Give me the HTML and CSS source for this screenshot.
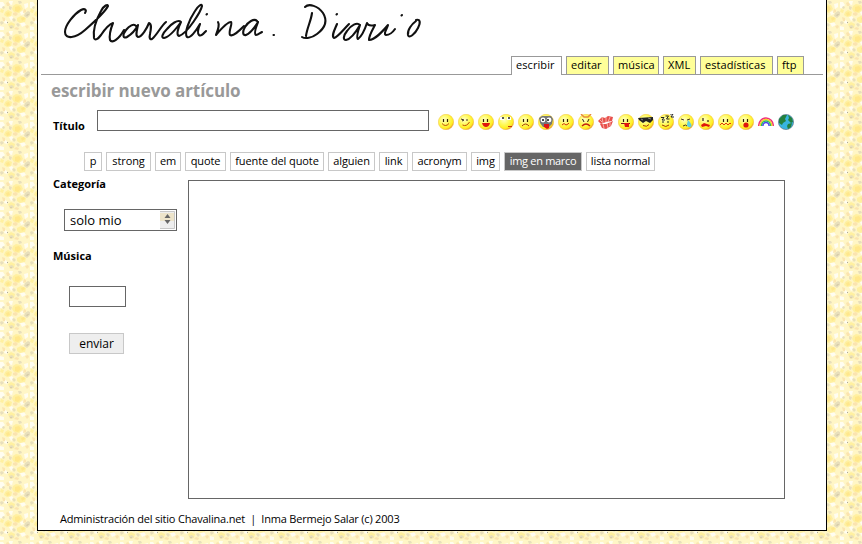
FILE: index.html
```html
<!DOCTYPE html>
<html lang="es">
<head>
<meta charset="utf-8">
<title>Chavalina. Diario</title>
<link rel="stylesheet" href="styles.css">
</head>
<body>
<svg class="backdrop" width="862" height="544" aria-hidden="true">
  <defs>
    <pattern id="petals" width="30" height="30" patternUnits="userSpaceOnUse">
      <rect width="30" height="30" fill="#fff6c6"/>
      <path fill="#fffdf0" d="M0 2h3l2 3-3 3H0zM9 1h4l-1 4-3-1zM24 4l4-1v4l-3 2zM9 17l3-1 2 3-3 2zM20 23l4-1 2 3-4 2zM0 26l4 1v3H0zM20 12l3-1 1 3-3 1zM5 20l2 1v3l-3-1z"/>
      <path fill="#fff0a0" d="M13 6l3-2 5 1 2 4-4 4-5-1-2-3zM5 12l3-2 4 2-1 4-4 1-3-2zM17 18l4-2 5 2-1 4-5 1-3-2zM8 24l3-2 4 2-1 4-4 1zM1 9l3 1-1 3-3-1z"/>
      <path fill="#ffe78c" d="M15 7l4-1 2 3-3 3-3-1zM21 18l3-1 1 2-3 2zM6 13l3-1 1 3-3 1z"/>
      <path fill="#fbe4b0" d="M6 3l2-1 2 2-1 2H7zM13 13l3-1 2 2-2 2-3-1zM24 9l2 1v2l-3 1zM2 17l3 1v3l-2 0zM25 26l3-1 1 2-2 2zM14 29l2-2 3 1-1 2z"/>
      <path fill="#e8dfbc" d="M25 13l3-2 2 1v3l-3 3-3-2zM9 6l3 1-1 3-2-1zM18 1l3 0 1 2-3 1zM0 22l2-1 2 2-3 2zM12 19l2-1 2 2-2 2zM9 26l3-1 2 2-3 2zM3 6l2 1-1 2-2-1zM16 24l2-1 2 2-2 2z"/>
      <path fill="#d9cfac" d="M27 14h2v1h-1v1h-2zM10 27h2v1h-2z"/>
      <path fill="#aaa89a" d="M7 22h1v1H7z"/>
    </pattern>
  </defs>
  <rect width="862" height="544" fill="url(#petals)"/>
</svg>

<svg class="sprites" width="0" height="0" aria-hidden="true">
  <defs>
    <radialGradient id="skin" cx="38%" cy="35%" r="70%">
      <stop offset="0" stop-color="#ffffc8"/><stop offset=".45" stop-color="#fffa5c"/><stop offset=".82" stop-color="#ffec20"/><stop offset="1" stop-color="#e88430"/>
    </radialGradient>
    <g id="face"><circle cx="8" cy="8" r="7.7" fill="url(#skin)" stroke="#f2c040" stroke-width=".5"/></g>
    <g id="eyes"><path d="M5.500 5v3M9.500 5v3" stroke="#332200" stroke-width="1.200"/></g>
  </defs>
</svg>

<div class="page">
  <header class="header">
    <svg class="logo" width="370" height="50" viewBox="60 0 370 50" role="img" aria-label="Chavalina. Diario">
      <g fill="none" stroke="#111" stroke-width="2.100" stroke-linecap="round" stroke-linejoin="round">
        <path d="M85 13c2-3 0-5-4-3-7 4-16 15-16 22 0 8 11 6 20-2 8-7 20-18 23-24 0-2-4-1-7 5-5 9-8 20-7 27 1 3 4 1 7-3 4-6 9-11 12-12-2 5-4 12-3 17 2 4 9-1 14-10"/>
        <path d="M136 26c-2-3-7 0-10 4-4 5-3 9 1 7 5-3 9-8 11-12-1 5-3 11 0 12 4 0 9-9 11-14 3 1 2 6 1 11-1 4 0 6 2 5 5-4 9-13 14-17"/>
        <path d="M181 22c-3-3-10 2-14 7-5 5-6 9-3 9 6-1 12-9 17-16-3 6-5 13-2 14 9-3 22-25 23-30 0-3-4 0-7 5-6 9-11 22-8 26 3 2 9-6 13-13-2 5-3 9-1 11 2 2 5-2 7-4"/>
        <path d="M207 14l-.5.5M218 22c2 3 0 8-2 13 5-6 11-13 15-13 2 1-3 10-1 13 3 2 9-4 14-9"/>
        <path d="M257 21c-3-3-9 1-12 6-3 5-2 9 1 8 5-2 9-8 12-13-2 5-4 12-2 13 2 0 4-2 6-3M273.500 35h.5"/>
        <path d="M312 13c-1 8-5 15-6 23M305 7c4-4 13-1 18 6 5 8 2 15-6 21-5 4-12 5-15 3"/>
        <path d="M337 14l-.5.500M337 24c-2 5-6 12-3 14 4-1 9-8 15-14"/>
        <path d="M360 25c-3-3-9 0-13 6-4 5-4 9-1 9 5-1 10-8 14-15-2 6-4 13-2 14 4-3 7-10 9-16 1 3 4 3 8 2-2 4-6 10-6 15 6 0 13-8 19-15-1 4-5 9-2 10 3 0 7-3 9-6M402 15l-.5.500"/>
        <path d="M416 21c-4 3-9 9-8 14 1 4 7-1 10-7 3-6 2-9-2-8"/>
      </g>
    </svg>
    <nav class="tabs">
      <a class="tab tab-current w51">escribir</a>
      <a class="tab w43">editar</a>
      <a class="tab w46">música</a>
      <a class="tab w33">XML</a>
      <a class="tab w73">estadísticas</a>
      <a class="tab w27">ftp</a>
    </nav>
  </header>

  <h1 class="title">escribir nuevo artículo</h1>

  <div class="title-row">
    <label class="label" for="titulo">Título</label>
    <input class="box title-input" id="titulo">
    <div class="smileys">
      <svg viewBox="0 0 16 16"><use href="#face"/><use href="#eyes"/><path d="M4 9.500q3.500 4 7 0" fill="none" stroke="#c04a08"/></svg>
      <svg viewBox="0 0 16 16"><use href="#face"/><path d="M3 5l3 1-2 1M9 5v2" fill="none" stroke="#432"/><path d="M4.500 11q4 2 7-3" fill="none" stroke="#c04a08"/></svg>
      <svg viewBox="0 0 16 16"><use href="#face"/><use href="#eyes"/><path d="M4 9h8q-1 4-4 4T4 9z" fill="#e0180b"/></svg>
      <svg viewBox="0 0 16 16"><use href="#face"/><path d="M2 3h4v3H2zM9 3h4v3H9z" fill="#fff"/><path d="M4 4h2M10 4h2" stroke="#222" stroke-width="1.500"/><path d="M10 12.500h4" stroke="#c2350d"/></svg>
      <svg viewBox="0 0 16 16"><use href="#face"/><use href="#eyes"/><path d="M4 12q3.500-4 7 0" fill="none" stroke="#a33a08"/></svg>
      <svg viewBox="0 0 16 16"><use href="#face"/><path d="M1 4l3-2h9l2 3-1 5-3 3H5L2 9z" fill="#777"/><circle cx="5" cy="6" r="2.400" fill="#fff"/><circle cx="11" cy="6" r="2.400" fill="#fff"/><path d="M5 5v2M10 5v2" stroke="#111" stroke-width="1.500"/><path d="M6 10h5v4l-2 1-3-2z" fill="#e01414"/></svg>
      <svg viewBox="0 0 16 16"><use href="#face"/><use href="#eyes"/><path d="M4 11l2-1.500 2 1.500 2-1 1-1" fill="none" stroke="#d2350d"/></svg>
      <svg viewBox="0 0 16 16"><use href="#face"/><path d="M3 0l3 3h4l3-3" fill="none" stroke="#e88a3b" stroke-width="1.500"/><path d="M4.500 5l1.500 3M11 5L9.500 8" stroke="#321"/><path d="M4 12q4-4 8 0" fill="none" stroke="#c2200d" stroke-width="1.300"/></svg>
      <svg viewBox="0 0 16 16"><path d="M0 7l4-4 3 1 3-2 5 1-1 4-6 1-5 2zM2 10l6 0 7-3-2 5-5 3-4-1z" fill="#e8504c"/><path d="M4 3l1 6M8 3v5M12 3l-2 5M5 10l1 4M9 9l1 5M2 6l2 2M12 8v4" stroke="#fbd6ca" stroke-width=".7"/></svg>
      <svg viewBox="0 0 16 16"><use href="#face"/><use href="#eyes"/><path d="M3 9.500h9" stroke="#812"/><path d="M6 9h5v4H7z" fill="#e2180b"/></svg>
      <svg viewBox="0 0 16 16"><use href="#face"/><path d="M0 4l15-1v3l-3 3-4-2-3 2-4-3z" fill="#222"/><path d="M3 5l2 1M10 4l3 1" stroke="#888"/><path d="M5 11.500q4 2 6-1" fill="none" stroke="#a33a08"/></svg>
      <svg viewBox="0 0 16 16"><use href="#face"/><path d="M3 3.500h3L4 6h3M7.500 2h3l-2 3h3M12 0h3l-2 3h3M4 8h2M9 8h2" fill="none" stroke="#222"/><path d="M4 11q4 3 7 0" fill="none" stroke="#a33a08"/></svg>
      <svg viewBox="0 0 16 16"><use href="#face"/><path d="M3 5l3 1M9 6l3-1M5 12q3-2 4 0" fill="none" stroke="#432"/><path d="M10 6q5 5 3 7-4 1-4-3z" fill="#60cfe2"/></svg>
      <svg viewBox="0 0 16 16"><use href="#face"/><path d="M5 4v3M10 6v2" stroke="#321" stroke-width="1.200"/><path d="M3 11l3-2 6 2-1 2-3-1-4 1z" fill="#e0180b"/></svg>
      <svg viewBox="0 0 16 16"><use href="#face"/><use href="#eyes"/><path d="M2 11l2-2 2 2 2-2 2 2 2-2 1 1" fill="none" stroke="#e2350d"/></svg>
      <svg viewBox="0 0 16 16"><use href="#face"/><use href="#eyes"/><circle cx="8" cy="11" r="2.600" fill="#e0180b"/></svg>
      <svg viewBox="0 0 16 16"><g fill="none" stroke-width="1.500"><path d="M.7 12a7.300 8 0 0 1 14.600 0" stroke="#f0307a"/><path d="M2.100 12a5.900 6.400 0 0 1 11.800 0" stroke="#f5d028"/><path d="M3.500 12a4.500 5 0 0 1 9 0" stroke="#20c060"/><path d="M4.900 12a3.100 3.600 0 0 1 6.200 0" stroke="#5040f0"/></g></svg>
      <svg viewBox="0 0 16 16"><circle cx="8" cy="8" r="7.600" fill="#38b4e0" stroke="#567" stroke-width=".6"/><path d="M1 5l4-4 4 0-2 4 1 2-3 2-1 2-3-2zM10 1l4 3 1 4-2 1-3-3 1-2zM10 10l4-1-1 4-3 2-1-3z" fill="#24803e"/></svg>
    </div>
  </div>

  <div class="tags">
    <a class="tag w18">p</a>
    <a class="tag w45">strong</a>
    <a class="tag w26">em</a>
    <a class="tag w41">quote</a>
    <a class="tag w94">fuente del quote</a>
    <a class="tag w47">alguien</a>
    <a class="tag w29">link</a>
    <a class="tag w55">acronym</a>
    <a class="tag w29">img</a>
    <a class="tag tag-active w78">img en marco</a>
    <a class="tag w69">lista normal</a>
  </div>

  <div class="editor">
    <div class="side">
      <span class="label">Categoría</span>
      <div class="box select"><span>solo mio</span>
        <svg width="15" height="18" viewBox="0 0 15 18"><path fill="#eee" d="M0 0h15v18H0z"/><path fill="#ede4ca" d="M0 2h14v8H0z"/><path fill="none" stroke="#c8c8c8" d="M0 .5h14.500v17H0"/><path fill="#666" d="M7.500 3l3 4h-6zM4.500 9h6l-3 4z"/></svg>
      </div>
      <label class="label" for="musica">Música</label>
      <input class="box music-input" id="musica">
      <button class="send">enviar</button>
    </div>
    <textarea class="box text"></textarea>
  </div>

  <footer class="footer">Administración del sitio Chavalina.net&nbsp; |&nbsp; Inma Bermejo Salar (c) 2003</footer>
</div>
</body>
</html>
```
FILE: styles.css
```css
* { box-sizing: border-box; }
body { margin: 0; height: 544px; overflow: hidden; background: #fff5c0; color: #000; font: 11px "Open Sans", sans-serif; }
.backdrop { position: absolute; left: 0; top: 0; z-index: -1; }
.sprites { position: absolute; }
.page { width: 790px; height: 531px; margin-left: 37px; background: #fff; border: 1px solid #000; border-top: 0; }
.header { height: 75px; margin: 0 3px; display: flex; justify-content: space-between; align-items: flex-start; border-bottom: 1px solid #999; }
.logo { margin-left: 19px; flex: none; }
.tabs { display: flex; gap: 4px; margin: 56px 19px 0 0; }
.tab { height: 18px; padding-left: 4px; border: 1px solid #999; border-bottom: 0; background: #ffff99; line-height: 16px; white-space: nowrap; letter-spacing: .08px; }
.tab-current { height: 19px; background: #fff; }
.title { margin: 6px 0 0 13px; height: 20px; font: bold 17px/20px "Open Sans", sans-serif; letter-spacing: -.08px; color: #999; white-space: nowrap; }
.label { font: bold 11px/14px "Open Sans", sans-serif; }
.box { display: block; margin: 0; padding: 0; border: 1px solid #666; border-radius: 0; background: #fff; outline: 0; }
.title-row { display: flex; height: 31px; margin: 9px 0 0 15px; align-items: flex-start; }
.title-row .label { width: 44px; margin-top: 9px; }
.title-input { width: 332px; height: 21px; }
.smileys { display: flex; gap: 4px; margin: 4px 0 0 9px; }
.smileys svg { width: 16px; height: 16px; display: block; }
.tags { display: flex; gap: 4px; margin: 11px 0 0 46px; }
.tag { height: 19px; border: 1px solid #c8c8c8; line-height: 16px; text-align: center; white-space: nowrap; letter-spacing: -.1px; }
.tag-active { background: #666; color: #fff; letter-spacing: -.3px; }
.editor { display: flex; margin: 6px 0 0 15px; height: 322px; }
.side { width: 135px; display: flex; flex-direction: column; align-items: flex-start; }
.side .label { display: block; height: 14px; }
.select { width: 113px; height: 22px; margin: 18px 0 18px 11px; padding: 0 1px 0 5px; display: flex; align-items: center; justify-content: space-between; font: 13px "Open Sans", sans-serif; }
.music-input { width: 57px; height: 21px; margin: 23px 0 26px 16px; }
.send { width: 55px; height: 21px; margin: 0 0 0 16px; padding: 0; border: 1px solid #c8c8c8; background: #eee; color: #000; font: 12px/17px "Open Sans", sans-serif; }
.text { width: 597px; height: 319px; margin-top: 3px; resize: none; }
.footer { margin: 12px 0 0 22px; line-height: 15px; white-space: nowrap; letter-spacing: -.2px; }
.w18 { width: 18px; } .w26 { width: 26px; } .w27 { width: 27px; } .w29 { width: 29px; }
.w33 { width: 33px; } .w41 { width: 41px; } .w43 { width: 43px; } .w45 { width: 45px; }
.w46 { width: 46px; } .w47 { width: 47px; } .w51 { width: 51px; } .w55 { width: 55px; }
.w69 { width: 69px; } .w73 { width: 73px; } .w78 { width: 78px; } .w94 { width: 94px; }
```
